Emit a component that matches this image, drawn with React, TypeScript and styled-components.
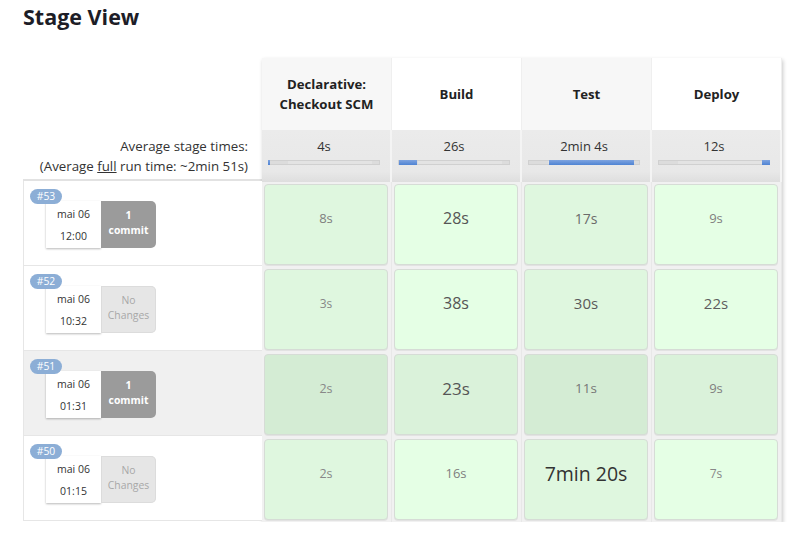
import React from "react";
import styled, { createGlobalStyle } from "styled-components";

const Global = createGlobalStyle`
  html, body { margin: 0; padding: 0; background: #fff; }
  body { font-family: "Open Sans", "Noto Sans", Arial, sans-serif; color: #333; }
`;

const Page = styled.div`
  padding: 0 0 0 23px;
  width: 805px;
  box-sizing: border-box;
`;

const Title = styled.h2`
  margin: 0;
  padding-top: 2px;
  height: 58px;
  box-sizing: border-box;
  font-size: 21.5px;
  font-weight: 700;
  color: #1d1d27;
  letter-spacing: 0;
`;

const Board = styled.div`
  display: flex;
  align-items: flex-start;
`;

const LeftCol = styled.div`
  width: 239px;
  display: flex;
  flex-direction: column;
`;

const LeftHeadSpacer = styled.div`
  height: 72px;
`;

const AvgLabel = styled.div`
  height: 51px;
  box-sizing: border-box;
  border-bottom: 2px solid #e2e2e2;
  text-align: right;
  padding: 6px 14px 0 0;
  font-size: 13.3px;
  line-height: 20px;
  color: #333;
  u { text-decoration: underline; }
`;

const BuildRow = styled.div<{ $hover?: boolean }>`
  position: relative;
  height: 85px;
  box-sizing: border-box;
  border-left: 1px solid #e6e6e6;
  border-bottom: 1px solid #e6e6e6;
  background: ${(p) => (p.$hover ? "#f0f0f0" : "#fff")};
  padding: 20px 0 0 22px;
  display: flex;
  align-items: flex-start;
`;

const Badge = styled.span`
  position: absolute;
  left: 6px;
  top: 8px;
  height: 15px;
  width: 32px;
  border-radius: 8px;
  background: #8caed6;
  color: #fff;
  font-size: 10.3px;
  line-height: 15px;
  text-align: center;
  z-index: 1;
`;

const DateBox = styled.div`
  width: 55px;
  height: 47px;
  background: #fff;
  box-shadow: 0 1px 2px rgba(0, 0, 0, 0.28);
  display: flex;
  flex-direction: column;
  align-items: center;
  justify-content: center;
  gap: 6px;
  font-size: 10.5px;
  line-height: 16px;
  color: #333;
`;

const ChangesBox = styled.div<{ $commit?: boolean }>`
  width: 55px;
  height: 47px;
  border-radius: 0 5px 5px 0;
  background: ${(p) => (p.$commit ? "#9b9b9b" : "#e6e6e6")};
  box-shadow: ${(p) => (p.$commit ? "none" : "inset 0 0 0 1px #dcdcdc")};
  color: ${(p) => (p.$commit ? "#fff" : "#a8a8a8")};
  font-weight: ${(p) => (p.$commit ? 700 : 400)};
  font-size: 10.4px;
  line-height: 15px;
  display: flex;
  flex-direction: column;
  align-items: center;
  justify-content: center;
  text-align: center;
  padding-bottom: 4px;
  box-sizing: border-box;
`;

const Table = styled.div`
  width: 520px;
  background: #f1f1f1;
  box-shadow: 1px 2px 4px rgba(0, 0, 0, 0.22);
  display: flex;
  flex-direction: column;
`;

const HeadRow = styled.div`
  display: grid;
  grid-template-columns: repeat(4, 130px);
  height: 72px;
`;

const HeadCell = styled.div<{ $shade: boolean }>`
  background: ${(p) => (p.$shade ? "#f7f7f7" : "#fff")};
  border-right: 1px solid #efefef;
  display: flex;
  align-items: center;
  justify-content: center;
  text-align: center;
  font-weight: 700;
  font-size: 13.2px;
  line-height: 20px;
  color: #222;
`;

const AvgRow = styled.div`
  display: grid;
  grid-template-columns: repeat(4, 130px);
  height: 52px;
`;

const AvgCell = styled.div`
  background: linear-gradient(#ebebeb 0%, #e8e8e8 80%, #dedede 100%);
  border-right: 2px solid #f4f4f4;
  display: flex;
  flex-direction: column;
  align-items: flex-start;
  padding: 7px 0 0 6px;
  box-sizing: border-box;
`;

const AvgTime = styled.div`
  width: 112px;
  text-align: center;
  font-size: 13px;
  line-height: 18px;
  color: #333;
`;

const Track = styled.div`
  position: relative;
  margin-top: 5px;
  width: 112px;
  height: 5px;
  background: #dcdcdc;
  box-shadow: inset 0 0 0 1px #d0d0d0;
`;

const TrackLight = styled.div`
  position: absolute;
  left: 20px;
  right: 8px;
  top: 1px;
  bottom: 1px;
  background: #e3e3e3;
`;

const Fill = styled.div`
  position: absolute;
  top: 0;
  height: 5px;
  background: linear-gradient(#7ea4e0, #4f83d3);
`;

const BodyRow = styled.div`
  display: grid;
  grid-template-columns: repeat(4, 130px);
  height: 85px;
`;

const CellWrap = styled.div`
  padding: 2px 3px 2px 2px;
  border-right: 1px solid #e8e8e8;
  box-sizing: border-box;
  display: flex;
`;

const StageCell = styled.div<{ $bg: string; $size: number; $color: string }>`
  flex: 1;
  border-radius: 4px;
  border: 1px solid #d6dcd6;
  box-shadow: 0 1px 0 rgba(0, 0, 0, 0.06);
  background: ${(p) => p.$bg};
  display: flex;
  align-items: center;
  justify-content: center;
  padding-bottom: 13px;
  box-sizing: border-box;
  font-size: ${(p) => p.$size}px;
  color: ${(p) => p.$color};
`;

type Cell = { t: string; s: number; c: string };

const stages = [
  ["Declarative:", "Checkout SCM"],
  ["Build"],
  ["Test"],
  ["Deploy"],
];

const averages = [
  { t: "4s", left: 0, width: 2 },
  { t: "26s", left: 1, width: 18 },
  { t: "2min 4s", left: 21, width: 85 },
  { t: "12s", left: 104, width: 8 },
];

const builds: {
  id: string;
  date: string;
  time: string;
  commit: boolean;
  hover?: boolean;
  cells: Cell[];
}[] = [
  {
    id: "#53",
    date: "mai 06",
    time: "12:00",
    commit: true,
    cells: [
      { t: "8s", s: 13, c: "#808080" },
      { t: "28s", s: 16, c: "#555" },
      { t: "17s", s: 14, c: "#6b6b6b" },
      { t: "9s", s: 13, c: "#808080" },
    ],
  },
  {
    id: "#52",
    date: "mai 06",
    time: "10:32",
    commit: false,
    cells: [
      { t: "3s", s: 12, c: "#888" },
      { t: "38s", s: 16, c: "#555" },
      { t: "30s", s: 15, c: "#5a5a5a" },
      { t: "22s", s: 15, c: "#5e5e5e" },
    ],
  },
  {
    id: "#51",
    date: "mai 06",
    time: "01:31",
    commit: true,
    hover: true,
    cells: [
      { t: "2s", s: 12.5, c: "#888" },
      { t: "23s", s: 17, c: "#555" },
      { t: "11s", s: 13.5, c: "#777" },
      { t: "9s", s: 13, c: "#808080" },
    ],
  },
  {
    id: "#50",
    date: "mai 06",
    time: "01:15",
    commit: false,
    cells: [
      { t: "2s", s: 12.5, c: "#888" },
      { t: "16s", s: 13, c: "#808080" },
      { t: "7min 20s", s: 19.5, c: "#333" },
      { t: "7s", s: 12, c: "#888" },
    ],
  },
];

const cellBg = (col: number, hover?: boolean) => {
  const shaded = col % 2 === 0;
  if (hover) return shaded ? "#d4ecd4" : "#daf2da";
  return shaded ? "#dff7df" : "#e5ffe5";
};

export default function App() {
  return (
    <Page>
      <Global />
      <Title>Stage View</Title>
      <Board>
        <LeftCol>
          <LeftHeadSpacer />
          <AvgLabel>
            Average stage times:
            <br />
            (Average <u>full</u> run time: ~2min 51s)
          </AvgLabel>
          {builds.map((b) => (
            <BuildRow key={b.id} $hover={b.hover}>
              <Badge>{b.id}</Badge>
              <DateBox>
                <span>{b.date}</span>
                <span>{b.time}</span>
              </DateBox>
              <ChangesBox $commit={b.commit}>
                {b.commit ? (
                  <>
                    <span>1</span>
                    <span>commit</span>
                  </>
                ) : (
                  <>
                    <span>No</span>
                    <span>Changes</span>
                  </>
                )}
              </ChangesBox>
            </BuildRow>
          ))}
        </LeftCol>
        <Table>
          <HeadRow>
            {stages.map((s, i) => (
              <HeadCell key={i} $shade={i % 2 === 0}>
                <div>
                  {s.map((l) => (
                    <div key={l}>{l}</div>
                  ))}
                </div>
              </HeadCell>
            ))}
          </HeadRow>
          <AvgRow>
            {averages.map((a, i) => (
              <AvgCell key={i}>
                <AvgTime>{a.t}</AvgTime>
                <Track>
                  <TrackLight />
                  <Fill style={{ left: a.left, width: a.width }} />
                </Track>
              </AvgCell>
            ))}
          </AvgRow>
          {builds.map((b) => (
            <BodyRow key={b.id}>
              {b.cells.map((c, i) => (
                <CellWrap key={i}>
                  <StageCell $bg={cellBg(i, b.hover)} $size={c.s} $color={c.c}>
                    {c.t}
                  </StageCell>
                </CellWrap>
              ))}
            </BodyRow>
          ))}
        </Table>
      </Board>
    </Page>
  );
}
